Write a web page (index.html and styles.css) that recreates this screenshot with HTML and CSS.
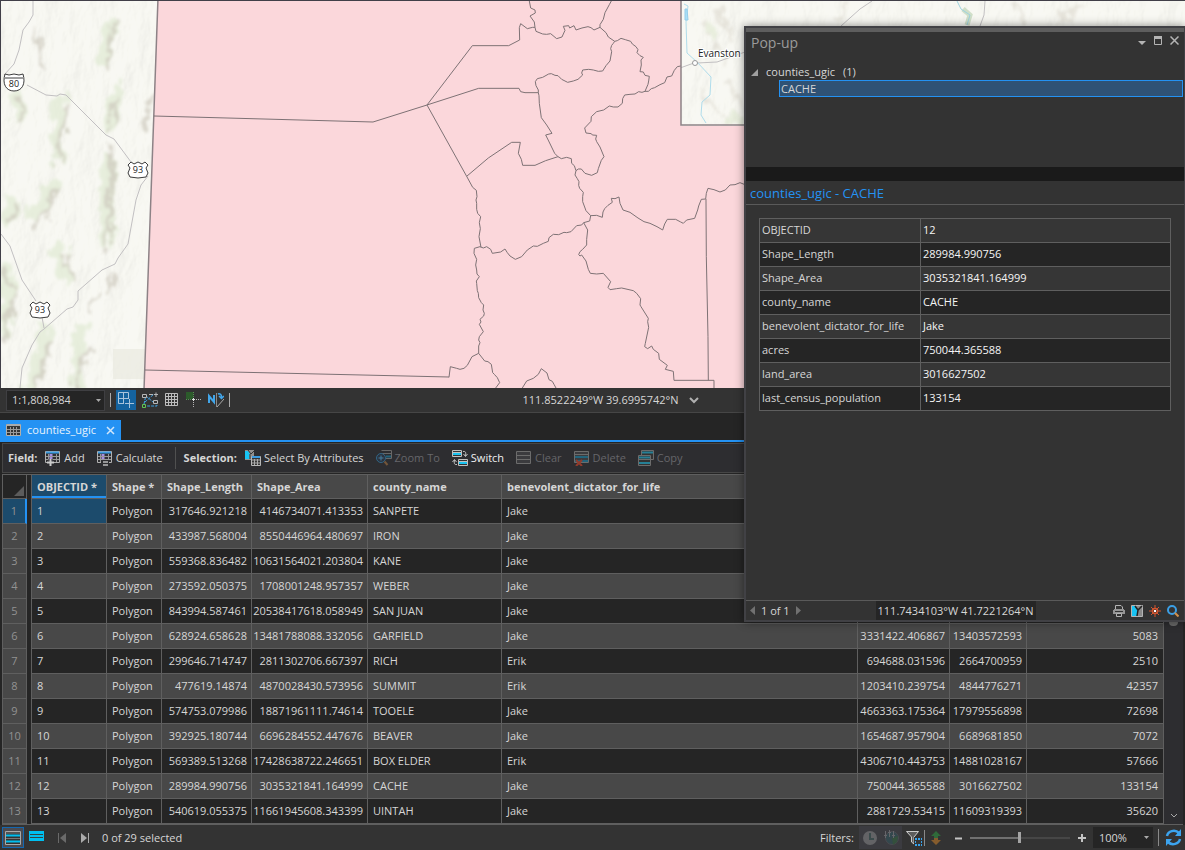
FILE: index.html
```html
<!DOCTYPE html>
<html lang="en">
<head>
<meta charset="utf-8">
<title>counties_ugic</title>
<link rel="stylesheet" href="styles.css">
</head>
<body>
<main class="window">
  <section class="map" aria-label="Map">
    <svg class="map-canvas" viewBox="1 1 1184 387" preserveAspectRatio="xMinYMin slice">
      <defs>
        <filter id="terrain" x="-10%" y="-10%" width="120%" height="120%">
          <feTurbulence type="fractalNoise" baseFrequency="0.09 0.06" numOctaves="3" seed="4"/>
          <feDisplacementMap in="SourceGraphic" scale="22" xChannelSelector="R" yChannelSelector="G"/>
          <feGaussianBlur stdDeviation="1.8"/>
        </filter>
        <filter id="relief" x="0" y="0" width="100%" height="100%">
          <feTurbulence type="fractalNoise" baseFrequency="0.035 0.018" numOctaves="5" seed="11"/>
          <feDiffuseLighting surfaceScale="3" diffuseConstant="1.35" lighting-color="#fafaf5">
            <feDistantLight azimuth="215" elevation="50"/>
          </feDiffuseLighting>
        </filter>
      </defs>
      <rect width="1185" height="388" fill="#f6f6f0"/>
      <rect width="1185" height="388" filter="url(#relief)" opacity=".22"/>
      <g filter="url(#terrain)" fill="none" stroke-linecap="round">
        <g stroke="#e0e9d3" stroke-width="13" opacity=".7">
          <path d="M112 25L102 60M118 88L108 125M60 100L58 160M15 95L20 115M55 185L32 215M108 160L106 245M58 250L66 275M8 270L6 330M50 330L30 385M80 330L78 385M12 200L10 220"/>
        </g>
        <g stroke="#c9c4b8" stroke-width="4" opacity=".65">
          <path d="M116 20L104 70M116 98L110 128M150 100L145 130M68 105L58 165M18 100L22 120M57 190L34 228M112 145L108 255M66 255L72 280M4 272L14 300L4 340M50 345L34 388M92 345L74 388M95 295L92 310M14 205L12 222M36 30L42 70M112 275L106 290"/>
        </g>
      </g>
      <g filter="url(#terrain)" fill="none" stroke="#dcd8cd" stroke-width="4" opacity=".6">
        <path d="M702 20L726 62M716 10L735 40M700 90L722 116M728 80L740 108M850 5L835 22M1010 5L1030 22M1090 4L1060 20"/>
        <path stroke="#dfe8d0" stroke-width="10" d="M711 20L712 35M725 120L742 118"/>
      </g>
      <rect x="113" y="349" width="32" height="30" fill="#eae9df" opacity=".7"/>
      <g fill="none" stroke="#c2c0c2">
        <path d="M33 1V15L29 22L23 30L19 50L14 64L4 75M27 85L46 95L57 96L60 94L66 95L106 135L114 139L131 162M148 176L141 185L136 200L128 244L118 258L115 264L102 270L78 291L78 300L73 307L67 309L44 329L40 332L32 345L22 368L20 388M1 234L10 246L22 280L36 301M42 317L44 328"/>
        <path d="M680 68L694 63M697 63L717 62L745 52M841 26L860 9L872 1M985 1L984 15L980 26"/>
      </g>
      <path d="M684 4L688 6L686 22L687 53L697 62L711 77L710 95L702 102L701 115L706 123" fill="none" stroke="#afdceb"/>
      <path d="M685 9L687 9L688 20L685 20Z" fill="#a9dff7" stroke="#94cdea"/>
      <path d="M963 9L970 15L967 25" fill="none" stroke="#b5cfae" stroke-width="5" opacity=".6"/>
      <path d="M957 1L961 9L970 15L967 25" fill="none" stroke="#9ed3df"/>
      <path d="M158 -2H681V126H1187V390H144Z" fill="#fbd7db"/>
      <path d="M158 -2L144 390M681 -2V125H1187" fill="none" stroke="#8d8286" stroke-width="1.500"/>
      <g fill="none" stroke="#7d7174" stroke-linejoin="round">
        <path d="M154 116L373 122L427 105M145 370L449 377"/>
        <g transform="scale(.33333) translate(1200 0)" stroke-width="3">
          <path d="M388 3L392 24L405 30L406 39L390 48L403 66L405 82L398 82L382 86L362 71L358 83L359 120L326 137H217L81 315L236 265H357L362 275L375 278H415L417 287L418 310L424 353L440 375L456 400L437 405L446 423L464 460L474 470L437 482L405 496H368L364 478L355 460L361 427H335L265 474L200 529L81 315"/>
          <path d="M634 3L628 14L615 38L610 58L600 74L600 82L582 90L573 83L564 80L546 84L528 90L522 77L509 84L506 77L490 79L495 91L486 111L470 116L452 101L440 103L428 102L408 94L405 82M600 82L618 98L625 111L644 124L640 130L635 136L632 146L635 155L630 183L618 197L608 213L595 214L580 210L566 208L548 210L545 219L548 225L534 238L520 243L503 247L485 238L474 227L465 226L454 221L446 222L428 232L412 236L406 245L408 257L415 270V278"/>
          <path d="M644 124L652 122L663 115L676 119L692 124L697 132L708 140L714 149L711 158L720 167L730 172L723 180L724 195L720 215L730 216L735 226L748 229L746 243L744 253L735 274H745L754 266L764 263L780 254L794 248L801 231L815 228L823 211L832 200L842 198M735 274L726 277L716 275L705 282L690 283L674 285L668 296L667 310L654 321L640 321L628 318L611 330L590 335L574 350L573 364L554 384L558 399L574 401L577 405L590 406L587 417L590 425L600 441L612 470L604 481L595 506L592 518L575 526L555 520L544 507L535 507L528 512L523 497L515 490L514 476L500 472L484 476L474 470"/>
          <path d="M200 529L218 562L229 571L231 590L228 600L230 610L230 628L233 640L242 650L238 668L241 686L237 710L243 742M528 512L525 525L532 536L537 545L536 556L539 565L550 577L548 590L548 605L558 632L572 647L590 646L607 652L609 636L614 626L624 616L637 607L634 595L645 596L657 591L660 610L669 630L690 637L714 654L732 665L750 670L771 680L788 690L794 672L802 658L827 658L842 666L850 670L860 660L884 655L893 630L896 618L904 598L917 597L919 580L924 565L942 569L960 576L976 570L990 555L1005 554L1020 548L1040 556"/>
          <path d="M572 647L569 663L551 668L545 675L530 677L513 695L500 698L492 697L476 704L460 703L447 713L445 724L430 730L412 739L400 738L382 750L365 770L346 778L330 768L322 758L315 747L302 756L277 760L272 748L260 740L250 744L240 740L223 745L222 760L230 778L227 795L230 810L231 822L238 830L229 843L230 850L232 872L235 880L236 893L244 908L251 915L249 930L253 940L251 948L240 958L243 966L238 973L250 995L238 1010L236 1020L240 1028L236 1038V1060L216 1070L202 1096L192 1105L180 1108L170 1105L151 1100L147 1132M236 1060L254 1083L264 1085L274 1093L278 1118L283 1123L292 1133L299 1148L287 1164M551 668L563 690L560 718L560 735L548 748L540 755L536 764L540 768L545 765L558 783L565 808L571 820L590 822L610 820L632 845L624 862L630 869L650 866L665 864L700 872L710 880L722 896L720 915L723 920L745 955L743 965L746 982L736 1030L734 1040L743 1046L755 1038L760 1048L776 1060L778 1078L802 1096L796 1108L820 1114L822 1141H942V1164M918 597L919 770L924 1010L925 1141M367 1164L380 1143L400 1135L415 1123L424 1106L441 1119L447 1139L457 1144L462 1153L468 1164"/>
        </g>
      </g>
      <circle cx="695" cy="63" r="2.500" fill="#fff" stroke="#999"/>
      <text class="place" x="698" y="57">Evanston</text>
      <g fill="#fff" stroke="#3c3c3c">
        <path d="M5 74L9 75L14 74L19 75L23 74C26 84 22 91 14 91C6 91 2 84 5 74Z"/>
        <path d="M5 78H23"/>
        <path id="us" d="M131 162L134 164L138 162L142 164L145 162L148 165L146 168L148 173L146 177L138 178L130 177L128 173L130 168L128 165Z"/>
        <use href="#us" x="-98" y="140"/>
      </g>
      <g class="shield">
        <text x="14" y="87">80</text><text x="138" y="173">93</text><text x="40" y="313">93</text>
      </g>
    </svg>
  </section>

  <div class="map-bar">
    <div class="map-tools">
      <span class="select scale"><select aria-label="Map scale"><option>1:1,808,984</option></select><svg class="caret" viewBox="0 0 5 3"><path d="M0 0H5L2.500 3Z"/></svg></span>
      <span class="rule"></span>
      <button class="tool on" aria-label="Snapping grid"><svg viewBox="0 0 16 16"><g fill="none" stroke="#a8c4dc"><path d="M10.500 6V.500H.500V11.500H6M5.500 .500V11M.500 6.500H11M11.500 7V16M7 11.500H16"/></g></svg></button>
      <button class="tool" aria-label="Constraints"><svg viewBox="0 0 16 16"><path d="M2 12L4 3M4 4L11 10M3 10L12 2M14 9L15 14H5" fill="none" stroke="#3d9fe0" stroke-dasharray="3 1"/><g fill="#333" stroke="#b8b8b8"><path d="M.5 2.500H4.500V5.500H.5ZM11.500 8.500H15.500V11.500H11.500ZM7 2.500H11M12 2.500H16M14 .5V5"/></g><path d="M.5 12.500H3.500V15.500H.5Z" fill="#333" stroke="#60c454"/></svg></button>
      <button class="tool" aria-label="Grid"><svg viewBox="0 0 16 16"><path d="M1.500 1.500H13.500V13.500H1.500ZM4.500 1V14M7.500 1V14M10.500 1V14M1 4.500H14M1 7.500H14M1 10.500H14" fill="none" stroke="#bdbdbd"/></svg></button>
      <button class="tool" aria-label="Inference"><svg viewBox="0 0 16 16"><path d="M0 0H7V7H0Z" fill="#2c5b2b"/><path d="M7.500 10V16M10 7.500H16" stroke="#b4b4b4" stroke-dasharray="1 1"/><path d="M7.500 0V6M0 7.500H6" stroke="#579254" stroke-dasharray="1 1"/><path d="M6 7.500H9M7.500 6V9" stroke="#ddd"/></svg></button>
      <button class="tool" aria-label="North correction"><svg viewBox="0 0 16 16"><path d="M1 11V4L6 10V3" fill="none" stroke="#42a6ea" stroke-width="2"/><path d="M8.500 1V15" stroke="#8a8a8a"/><path d="M9 15L16 7" stroke="#a9a9a9"/><path d="M10 2C12 1 14 3 13.500 6M11 4L13.500 6.500L16 4" fill="none" stroke="#42a6ea" stroke-width="1.500"/></svg></button>
      <span class="rule"></span>
    </div>
    <div class="coords"><span>111.8522249°W 39.6995742°N</span><button class="plain" aria-label="Coordinate units"><svg width="10" height="7" viewBox="0 0 10 7"><path d="M1 1L5 5L9 1" fill="none" stroke="#b0b0b0" stroke-width="2"/></svg></button></div>
  </div>

  <div class="tabs">
    <div class="tab">
      <svg class="i16" viewBox="0 0 16 16"><path d="M.5 2.500H14.500V13.500H.5Z" fill="#353535" stroke="#b5b0a8"/><path d="M1 3H14" stroke="#aaa" stroke-width="2"/><path d="M1 7.500H14M1 10.500H14M4.500 5V13M7.500 5V13M10.500 5V13" stroke="#999"/></svg>
      <button class="tab-name">counties_ugic</button>
      <button class="plain" aria-label="Close table"><svg width="9" height="9" viewBox="0 0 9 9"><path d="M1 1L8 8M8 1L1 8" stroke="#cfe6fb" stroke-width="1.500"/></svg></button>
    </div>
  </div>

  <div class="toolbar">
    <strong>Field:</strong>
    <button class="cmd"><svg class="i16" viewBox="0 0 16 16"><path d="M.5 1.500H14.500V12.500H.5Z" fill="#303033" stroke="#b0b0b0"/><path d="M1 2.500H14" stroke="#3b9be0" stroke-width="2"/><path d="M1 6.500H14M1 9.500H14M3.500 4V12M11.500 4V12" stroke="#999"/><path d="M6 4V12" stroke="#a58fe0" stroke-width="3" stroke-dasharray="2 1"/><path d="M2 12.500H9M5.500 9V16" stroke="#2d2d30" stroke-width="4"/><path d="M2 12.500H9M5.500 9V16" stroke="#ccc" stroke-width="2"/></svg>Add</button>
    <button class="cmd"><svg class="i16" viewBox="0 0 16 16"><path d="M.5 1.500H14.500V12.500H.5Z" fill="#303033" stroke="#b0b0b0"/><path d="M1 2.500H14" stroke="#3b9be0" stroke-width="2"/><path d="M1 6.500H14M1 9.500H14M3.500 4V12M11.500 4V12" stroke="#999"/><path d="M6 4V12" stroke="#a58fe0" stroke-width="3" stroke-dasharray="2 1"/><path d="M4 10H12V16H4Z" fill="#2d2d30"/><path d="M6 12H11M6 15H11" stroke="#bbb" stroke-width="1.500"/></svg>Calculate</button>
    <span class="divider"></span>
    <strong>Selection:</strong>
    <button class="cmd"><svg class="i16" viewBox="0 0 16 16"><path d="M0 0H9V10H0Z" fill="#909090"/><path d="M0 1H3L5 4L4 6L5 9H0Z" fill="#17c4f4"/><path d="M3 0L6 4L9 1M5 4V9" stroke="#333" fill="none"/><path d="M6.500 6.500H15.500V15.500H6.500Z" fill="#353535" stroke="#b7b7b7"/><path d="M7 7H15" stroke="#3b9be0" stroke-width="2"/><path d="M7 10H15M7 13H15M9.500 9V15M12.500 9V15" stroke="#aaa"/></svg>Select By Attributes</button>
    <button class="cmd" disabled><svg class="i16" viewBox="0 0 16 16"><path d="M5.500 .5H15.500V8.500H10M6 3.500H15" fill="none" stroke="#686868"/><path d="M10 6.500H15" stroke="#22647c" stroke-width="2"/><circle cx="5" cy="8" r="4.500" fill="#2b3440" stroke="#326686"/><path d="M2.500 8H7.500M5 5.500V10.500" stroke="#477ea0"/><path d="M8.500 11.500L11.500 15" stroke="#73563a" stroke-width="2"/></svg>Zoom To</button>
    <button class="cmd lit"><svg class="i16" viewBox="0 0 16 16"><path d="M.5 .5H9.500V6.500H.5ZM6.500 9.500H15.500V15.500H6.500Z" fill="#333" stroke="#c0c0c0"/><path d="M1 2.500H9M7 11.500H15" stroke="#c0c0c0"/><path d="M1 4H9M7 13H15" stroke="#18c2f0" stroke-width="2"/><path d="M11 1.500C14 1 14 3 13.500 6M11.500 4L13.500 6.500L15.500 4M5 14.500C2 15 2 13 2.500 10M.5 12L2.500 9.500L4.500 12" fill="none" stroke="#c0c0c0"/></svg>Switch</button>
    <button class="cmd" disabled><svg class="i16" viewBox="0 0 16 16"><path d="M.5 1.500H14.500V13.500H.5ZM1 5.500H14M1 9.500H14" fill="#3b3b3e" stroke="#6c6c6c"/></svg>Clear</button>
    <button class="cmd" disabled><svg class="i16" viewBox="0 0 16 16"><path d="M.5 1.500H14.500V12.500H.5ZM1 4.500H14" fill="#3b3b3e" stroke="#6c6c6c"/><path d="M1 7H14M1 11H14" stroke="#22647c" stroke-width="2"/><path d="M2 10L8 16M8 10L2 16" stroke="#913b2c" stroke-width="2"/></svg>Delete</button>
    <button class="cmd" disabled><svg class="i16" viewBox="0 0 16 16"><path d="M3.500 .5H15.500V9.500H3.500Z" fill="#333" stroke="#6c6c6c"/><path d="M4 2.500H15" stroke="#268096" stroke-width="2"/><path d="M.5 5.500H12.500V15.500H.5ZM1 9.500H12" fill="#333" stroke="#6c6c6c"/><path d="M1 7.500H12M1 13H12" stroke="#268096" stroke-width="2"/></svg>Copy</button>
  </div>

  <div class="grid-area">
    <table class="grid">
      <colgroup><col class="c-row"><col class="c-gap"><col class="c-id"><col class="c-shape"><col class="c-len"><col class="c-area"><col class="c-name"><col><col class="c-acres"><col class="c-land"><col class="c-pop"></colgroup>
      <thead><tr><th class="num corner" aria-label="Select all"><svg width="10" height="10" viewBox="0 0 10 10"><path d="M10 0V10H0Z" fill="#5c5c5c"/></svg></th><td class="gap"></td><th class="sorted">OBJECTID *</th><th>Shape *</th><th>Shape_Length</th><th>Shape_Area</th><th>county_name</th><th>benevolent_dictator_for_life</th><th>acres</th><th>land_area</th><th></th></tr></thead>
      <tbody>
        <tr><th class="num current">1</th><td class="gap"></td><td class="current">1</td><td>Polygon</td><td class="n">317646.921218</td><td class="n">4146734071.413353</td><td>SANPETE</td><td>Jake</td><td class="n"></td><td class="n"></td><td class="n"></td></tr>
        <tr><th class="num">2</th><td class="gap"></td><td>2</td><td>Polygon</td><td class="n">433987.568004</td><td class="n">8550446964.480697</td><td>IRON</td><td>Jake</td><td class="n"></td><td class="n"></td><td class="n"></td></tr>
        <tr><th class="num">3</th><td class="gap"></td><td>3</td><td>Polygon</td><td class="n">559368.836482</td><td class="n">10631564021.203804</td><td>KANE</td><td>Jake</td><td class="n"></td><td class="n"></td><td class="n"></td></tr>
        <tr><th class="num">4</th><td class="gap"></td><td>4</td><td>Polygon</td><td class="n">273592.050375</td><td class="n">1708001248.957357</td><td>WEBER</td><td>Jake</td><td class="n"></td><td class="n"></td><td class="n"></td></tr>
        <tr><th class="num">5</th><td class="gap"></td><td>5</td><td>Polygon</td><td class="n">843994.587461</td><td class="n">20538417618.058949</td><td>SAN JUAN</td><td>Jake</td><td class="n"></td><td class="n"></td><td class="n"></td></tr>
        <tr><th class="num">6</th><td class="gap"></td><td>6</td><td>Polygon</td><td class="n">628924.658628</td><td class="n">13481788088.332056</td><td>GARFIELD</td><td>Jake</td><td class="n">3331422.406867</td><td class="n">13403572593</td><td class="n">5083</td></tr>
        <tr><th class="num">7</th><td class="gap"></td><td>7</td><td>Polygon</td><td class="n">299646.714747</td><td class="n">2811302706.667397</td><td>RICH</td><td>Erik</td><td class="n">694688.031596</td><td class="n">2664700959</td><td class="n">2510</td></tr>
        <tr><th class="num">8</th><td class="gap"></td><td>8</td><td>Polygon</td><td class="n">477619.14874</td><td class="n">4870028430.573956</td><td>SUMMIT</td><td>Erik</td><td class="n">1203410.239754</td><td class="n">4844776271</td><td class="n">42357</td></tr>
        <tr><th class="num">9</th><td class="gap"></td><td>9</td><td>Polygon</td><td class="n">574753.079986</td><td class="n">18871961111.74614</td><td>TOOELE</td><td>Jake</td><td class="n">4663363.175364</td><td class="n">17979556898</td><td class="n">72698</td></tr>
        <tr><th class="num">10</th><td class="gap"></td><td>10</td><td>Polygon</td><td class="n">392925.180744</td><td class="n">6696284552.447676</td><td>BEAVER</td><td>Jake</td><td class="n">1654687.957904</td><td class="n">6689681850</td><td class="n">7072</td></tr>
        <tr><th class="num">11</th><td class="gap"></td><td>11</td><td>Polygon</td><td class="n">569389.513268</td><td class="n">17428638722.246651</td><td>BOX ELDER</td><td>Erik</td><td class="n">4306710.443753</td><td class="n">14881028167</td><td class="n">57666</td></tr>
        <tr><th class="num">12</th><td class="gap"></td><td>12</td><td>Polygon</td><td class="n">289984.990756</td><td class="n">3035321841.164999</td><td>CACHE</td><td>Jake</td><td class="n">750044.365588</td><td class="n">3016627502</td><td class="n">133154</td></tr>
        <tr><th class="num">13</th><td class="gap"></td><td>13</td><td>Polygon</td><td class="n">540619.055375</td><td class="n">11661945608.343399</td><td>UINTAH</td><td>Jake</td><td class="n">2881729.53415</td><td class="n">11609319393</td><td class="n">35620</td></tr>
      </tbody>
    </table>
    <div class="scrollbar"><span class="scroll-thumb"></span><svg width="8" height="5" viewBox="0 0 8 5"><path d="M1 1L4 4L7 1" fill="none" stroke="#aaa"/></svg></div>
  </div>

  <footer class="status">
    <button class="view on" aria-label="Show all records"><svg class="i16" viewBox="0 0 16 16"><path d="M.5 1.500H15.500V14.500H.5Z" fill="#333" stroke="#aaa"/><path d="M1 5.500H15M1 11.500H15" stroke="#00bff0" stroke-width="2"/><path d="M1 3H15M1 8.500H15" stroke="#777"/></svg></button>
    <button class="view" aria-label="Show selected records"><svg class="i16" viewBox="0 0 16 16"><path d="M0 1H15V11H0Z" fill="#00bff0"/><path d="M1 4.500H14M1 7.500H14" stroke="#344"/></svg></button>
    <button class="plain nav off" aria-label="First record"><svg width="10" height="10" viewBox="0 0 10 10"><path d="M1.500 0V10" stroke="currentColor"/><path d="M9 0V10L3 5Z" fill="currentColor"/></svg></button>
    <button class="plain nav" aria-label="Last record"><svg width="10" height="10" viewBox="0 0 10 10"><path d="M8.500 0V10" stroke="currentColor"/><path d="M1 0V10L7 5Z" fill="currentColor"/></svg></button>
    <span class="count">0 of 29 selected</span>
    <span class="filters">Filters:</span>
    <span class="filter-pair">
      <button class="plain" aria-label="Time filter"><svg class="i16" viewBox="0 0 16 16"><circle cx="8" cy="8" r="7" fill="#636366"/><path d="M8 3V9H12" fill="none" stroke="#3b4b4c" stroke-width="2"/></svg></button>
      <button class="plain" aria-label="Range filter"><svg class="i16" viewBox="0 0 16 16"><circle cx="9" cy="8" r="6.500" fill="#33474d" stroke="#4a4a50"/><path d="M9 8L15 6L14 12L10 15Z" fill="#34503c"/><path d="M2.500 1V8M6.500 0V7M10.500 1V8M1 5.500H4M5 2.500H8M9 5.500H12" stroke="#65656a"/></svg></button>
    </span>
    <button class="plain bar-after" aria-label="Extent filter"><svg class="i16" viewBox="0 0 16 16"><path d="M.5 1.500H12.500L8 7V14L5.500 12V7Z" fill="#5d5d5d" stroke="#ccc"/><path d="M8 7H16V16H8Z" fill="#333"/><path d="M9 9H16M9 15H16M9 12H10M15 12H16" stroke="#36a3ee" stroke-width="2" stroke-dasharray="2 1"/></svg></button>
    <button class="plain" aria-label="Sort by selection"><svg width="12" height="16" viewBox="0 0 12 16"><path d="M6 1L11 6H8V8H4V6H1Z" fill="#2f6a3a"/><path d="M6 15L11 10H8V8H4V10H1Z" fill="#855c2d"/></svg></button>
    <span class="zoom">
      <button class="plain" aria-label="Zoom out"><svg width="7" height="8" viewBox="0 0 7 8"><path d="M0 4.500H7" stroke="#c4c4c4" stroke-width="2"/></svg></button>
      <input type="range" min="0" max="100" value="49" aria-label="Zoom">
      <button class="plain" aria-label="Zoom in"><svg width="8" height="8" viewBox="0 0 8 8"><path d="M0 4H8M4 0V8" stroke="#c4c4c4" stroke-width="2"/></svg></button>
    </span>
    <span class="select percent"><select aria-label="Zoom level"><option>100%</option></select><svg class="caret" viewBox="0 0 5 3"><path d="M0 0H5L2.500 3Z"/></svg></span>
    <button class="plain refresh" aria-label="Refresh"><svg width="17" height="17" viewBox="0 0 17 17"><path d="M2 7C3 2 10 0 14 4M15 10C14 15 7 17 3 13" fill="none" stroke="#3ca4ef" stroke-width="2.500"/><path d="M16 0V7H10ZM1 17V10H7Z" fill="#3ca4ef"/></svg></button>
  </footer>
</main>

<aside class="popup" aria-label="Pop-up">
  <div class="grip"></div>
  <header class="popup-head">
    <h1>Pop-up</h1>
    <button class="plain" aria-label="Options"><svg width="8" height="8" viewBox="0 0 8 8"><path d="M0 4H8L4 8Z" fill="#b4b4b4"/></svg></button>
    <button class="plain" aria-label="Maximize"><svg width="8" height="9" viewBox="0 0 8 9"><path d="M.5 1V8.500H7.500V1" fill="none" stroke="#b4b4b4"/><path d="M0 1.500H8" stroke="#b4b4b4" stroke-width="3"/></svg></button>
    <button class="plain" aria-label="Close"><svg width="9" height="9" viewBox="0 0 9 9"><path d="M.5 .5L8.500 8.500M8.500 .5L.5 8.500" stroke="#b4b4b4" stroke-width="1.500"/></svg></button>
  </header>
  <div class="tree">
    <div class="branch"><svg width="7" height="7" viewBox="0 0 7 7"><path d="M7 0V7H0Z" fill="#a0a0a0"/></svg><span>counties_ugic</span><span>(1)</span></div>
    <div class="leaf">CACHE</div>
  </div>
  <div class="splitter"></div>
  <h2>counties_ugic - CACHE</h2>
  <div class="popup-body">
    <table class="attrs">
      <tr><th>OBJECTID</th><td>12</td></tr>
      <tr><th>Shape_Length</th><td>289984.990756</td></tr>
      <tr><th>Shape_Area</th><td>3035321841.164999</td></tr>
      <tr><th>county_name</th><td>CACHE</td></tr>
      <tr><th>benevolent_dictator_for_life</th><td>Jake</td></tr>
      <tr><th>acres</th><td>750044.365588</td></tr>
      <tr><th>land_area</th><td>3016627502</td></tr>
      <tr><th>last_census_population</th><td>133154</td></tr>
    </table>
  </div>
  <footer class="popup-foot">
    <div class="pager"><button class="plain" aria-label="Previous"><svg width="5" height="9" viewBox="0 0 5 9"><path d="M5 0V9L0 4.500Z" fill="#717171"/></svg></button><span>1 of 1</span><button class="plain" aria-label="Next"><svg width="5" height="9" viewBox="0 0 5 9"><path d="M0 0V9L5 4.500Z" fill="#717171"/></svg></button></div>
    <span class="position">111.7434103°W 41.7221264°N</span>
    <div class="popup-tools">
      <button class="plain" aria-label="Print"><svg width="12" height="12" viewBox="0 0 12 12"><path d="M2.500 4V.5H8L9.500 2V4" fill="none" stroke="#b4b4b4"/><path d="M0 5H1V4H11V5H12V9H0Z" fill="#959595"/><path d="M2 6.500H10" stroke="#333"/><path d="M3.500 8.500H8.500V11.500H3.500Z" fill="#333" stroke="#b4b4b4"/></svg></button>
      <button class="plain" aria-label="Select"><svg width="12" height="12" viewBox="0 0 12 12"><path d="M.5 .5H11.500V11.500H.5Z" fill="#8a8a8a" stroke="#b4b4b4"/><path d="M1 1H4L7 6L6 11H1Z" fill="#18c4f4"/><path d="M4 1L7 5L11 1M7 5L6 11" fill="none" stroke="#222" stroke-width="1.500"/></svg></button>
      <button class="plain" aria-label="Flash"><svg width="12" height="12" viewBox="0 0 12 12"><circle cx="6" cy="6" r="2.500" fill="#333" stroke="#d4552f" stroke-width="1.500"/><path d="M6 0V3M6 9V12M0 6H3M9 6H12M2 2L4 4M10 2L8 4M2 10L4 8M10 10L8 8" stroke="#d4552f"/><path d="M5 6H7" stroke="#fff" stroke-width="2"/></svg></button>
      <button class="plain" aria-label="Zoom to feature"><svg width="12" height="12" viewBox="0 0 12 12"><circle cx="5" cy="5" r="4" fill="none" stroke="#3b9fe6" stroke-width="2"/><path d="M8 8L11.500 11.500" stroke="#d28f4a" stroke-width="2"/></svg></button>
    </div>
  </footer>
</aside>
</body>
</html>
```
FILE: styles.css
```css
* { box-sizing: border-box; }
body {
  margin: 0;
  min-height: 100vh;
  background: #252525;
  color: #d6d6d6;
  font: 11px/16px "Open Sans", "Noto Sans", sans-serif;
  position: relative;
}
button, select, input { font: inherit; color: inherit; margin: 0; }
button { padding: 0; border: 0; background: none; display: inline-flex; align-items: center; }
svg { display: block; flex: none; }
.i16 { width: 16px; height: 16px; }

.window { display: flex; flex-direction: column; min-height: 100vh; }

/* Map */
.map { flex: 1; min-height: 200px; position: relative; border: solid #413f48; border-width: 1px 0 0 1px; overflow: hidden; }
.map-canvas { position: absolute; inset: 0; width: 100%; height: 100%; }
.place { font-size: 10px; fill: #222; stroke: #fff; stroke-width: 2px; paint-order: stroke; }
.shield { font-size: 9px; fill: #222; text-anchor: middle; }

.map-bar {
  display: grid;
  grid-template-columns: 1fr auto 1fr;
  align-items: center;
  height: 25px;
  padding-left: 6px;
  background: #333;
  border-bottom: 1px solid #464646;
}
.map-tools { display: flex; align-items: center; gap: 5px; }
.tool { width: 17px; height: 20px; justify-content: center; }
.tool svg { width: 16px; height: 16px; }
.tool.on { width: 20px; background: #14639f; }
.rule { width: 1px; height: 14px; background: #aaa; }
.select { position: relative; display: flex; height: 21px; }
.select select {
  appearance: none;
  width: 100%;
  padding: 0 16px 0 5px;
  background: #252525;
  border: 1px solid #3f3f42;
  border-radius: 0;
}
.scale { width: 99px; }
.caret { position: absolute; right: 4px; top: 9px; width: 5px; height: 3px; fill: #aaa; pointer-events: none; }
.coords { display: flex; align-items: center; gap: 10px; padding-left: 30px; }

/* Table tab */
.tabs { display: flex; padding-top: 7px; border-bottom: 2px solid #2492f3; }
.tab { display: flex; align-items: center; height: 20px; padding: 0 6px; gap: 10px; background: #2492f3; }
.tab-name { margin-left: -5px; color: #e8f2fc; }

/* Field and selection commands */
.toolbar {
  display: flex;
  align-items: center;
  gap: 12px;
  height: 30px;
  margin: 1px 2px;
  padding-left: 5px;
  background: #2d2d30;
  border: 1px solid #464646;
}
.toolbar strong { font-weight: 700; margin-right: -4px; }
.cmd { gap: 3px; white-space: nowrap; }
.cmd:disabled { color: #66666a; }
.cmd.lit { color: #f0f0f0; }
.divider { width: 1px; height: 22px; margin-right: -4px; background: #505050; }

/* Attribute table */
.grid-area { display: flex; margin: 0 2px; border-top: 1px solid #5f5f5f; border-bottom: 1px solid #5f5f5f; }
.grid { flex: 1; min-width: 0; table-layout: fixed; border-spacing: 0; }
.c-row { width: 25px; }
.c-gap { width: 5px; }
.c-id { width: 75px; }
.c-shape { width: 55px; }
.c-len { width: 90px; }
.c-area { width: 116px; }
.c-name { width: 134px; }
.c-acres { width: 92px; }
.c-land { width: 77px; }
.c-pop { width: 137px; }
.grid th, .grid td {
  height: 25px;
  padding: 0 5px;
  border: solid #5f5f5f;
  border-width: 0 1px 1px 0;
  text-align: left;
  white-space: nowrap;
  overflow: hidden;
}
.grid thead th, .grid thead td { height: 24px; }
.grid thead th { background: #484848; font-weight: 700; }
.grid tbody tr { background: #252525; }
.grid tbody tr:nth-child(even) { background: #484848; }
.grid .n { padding: 0 4px 0 0; text-align: right; }
.grid .n:last-child { padding-right: 5px; }
.grid .num { padding: 0; border-left-width: 1px; background: #484848; color: #929292; font-weight: 400; text-align: center; }
.grid thead .corner { background: #252525; padding: 8px 0 0 11px; }
.grid .gap { padding: 0; border-bottom: 0; background: #252525; }
.grid .current { background: #1c4b6c; }
.grid .num.current { border-right: 2px solid #2492f3; }
.grid thead .sorted { background: #1c4b6c; box-shadow: inset 0 -2px #2492f3; }
.scrollbar { width: 19px; display: flex; flex-direction: column; align-items: center; justify-content: space-between; padding: 142px 0 6px; background: #2d2d30; }
.scroll-thumb { width: 9px; height: 9px; border-radius: 4px; background: #6a6a6a; }

/* Status bar */
.status { display: flex; align-items: center; height: 25px; padding: 0 3px 0 2px; background: #333; }
.plain { justify-content: center; }
.view { width: 22px; height: 21px; justify-content: center; border: 1px solid transparent; margin-right: 2px; }
.view.on { border-color: #1467b0; background: #4a4a50; }
.nav { width: 14px; margin-left: 9px; color: #ababab; }
.nav.off { margin-left: 5px; color: #6a6a6a; }
.count { margin-left: 10px; }
.filters { margin-left: auto; }
.filter-pair { display: flex; align-items: center; gap: 5px; height: 23px; margin-left: 5px; padding: 0 3px; background: #3b3b40; }
.bar-after { margin-left: 4px; padding-right: 2px; border-right: 1px solid #8a8a8a; }
.bar-after + .plain { margin-left: 5px; }
.zoom { display: flex; align-items: center; gap: 8px; margin-left: 13px; }
.zoom input { appearance: none; width: 100px; height: 12px; background: linear-gradient(90deg, #707070 50%, #464646 50%) center / 100% 2px no-repeat; }
.zoom input::-webkit-slider-thumb { appearance: none; width: 3px; height: 11px; background: #a4a4a4; }
.percent { width: 60px; margin-left: 7px; }
.percent select { border-color: #252525; }
.refresh { margin-left: 5px; padding-left: 6px; border-left: 1px solid #8a8a8a; }

/* Floating pop-up pane */
.popup {
  position: absolute;
  top: 26px;
  right: 0;
  width: 441px;
  height: 596px;
  display: flex;
  flex-direction: column;
  background: #333;
  border: 2px solid #414145;
  border-right-width: 1px;
  box-shadow: 0 0 9px rgba(0, 0, 0, .45);
}
.grip { height: 4px; background: #5e5e5e; }
.popup-head { display: flex; align-items: flex-start; gap: 8px; padding: 0 5px; }
.popup-head h1 { flex: 1; margin: 0; font-size: 14px; font-weight: 400; line-height: 22px; color: #9b9b9b; }
.popup-head button { height: 9px; margin-top: 4px; }
.tree { height: 113px; padding: 10px 1px 0 5px; }
.branch { display: flex; align-items: center; gap: 8px; }
.leaf { height: 17px; margin-left: 28px; padding-left: 1px; line-height: 15px; background: #2f5275; border: 1px solid #2492f3; }
.splitter { height: 14px; background: #1a1a1a; }
.popup h2 { margin: 0; padding: 1px 4px 0; font-size: 13px; font-weight: 400; line-height: 22px; color: #2492f3; border-bottom: 1px solid #5a5a5a; }
.popup-body { flex: 1; padding: 13px 13px 0; }
.attrs { width: 100%; border-collapse: collapse; }
.attrs th, .attrs td { height: 24px; padding: 0 2px 2px; border: 1px solid #5f5f5f; text-align: left; font-weight: 400; background: #363636; }
.attrs tr:nth-child(even) > * { background: #252525; }
.attrs th { width: 161px; }
.attrs td { color: #f5f5f5; }
.popup-foot { display: grid; grid-template-columns: 7fr auto 8fr; align-items: center; height: 20px; padding: 0 5px 0 4px; border-top: 1px solid #5a5a5a; }
.pager { display: flex; align-items: center; gap: 6px; }
.position { padding: 0 2px; line-height: 19px; background: #252525; }
.popup-tools { display: flex; justify-content: flex-end; gap: 6px; }
```
